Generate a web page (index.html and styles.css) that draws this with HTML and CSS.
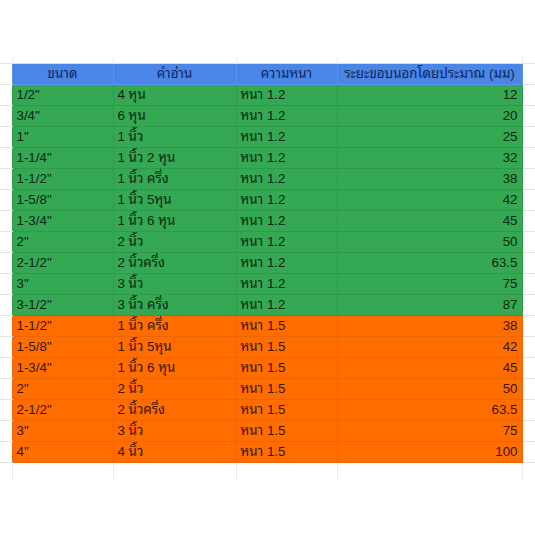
FILE: index.html
```html
<!DOCTYPE html>
<html lang="th">
<head>
<meta charset="utf-8">
<title>ตารางขนาดท่อ</title>
<link rel="stylesheet" href="styles.css">
</head>
<body>
<div class="sheet">
<table class="grid">
<colgroup>
<col class="c-m"><col class="c-a"><col class="c-b"><col class="c-c"><col class="c-d"><col class="c-r">
</colgroup>
<tbody>
<tr class="spacer top"><td></td><td></td><td></td><td></td><td></td><td></td></tr>
<tr class="head"><td class="m"></td><td>ขนาด</td><td>คำอ่าน</td><td>ความหนา</td><td>ระยะขอบนอกโดยประมาณ (มม)</td><td class="m"></td></tr>
<tr class="g"><td class="m"></td><td>1/2"</td><td>4 หุน</td><td>หนา 1.2</td><td class="n">12</td><td class="m"></td></tr>
<tr class="g"><td class="m"></td><td>3/4"</td><td>6 หุน</td><td>หนา 1.2</td><td class="n">20</td><td class="m"></td></tr>
<tr class="g"><td class="m"></td><td>1"</td><td>1 นิ้ว</td><td>หนา 1.2</td><td class="n">25</td><td class="m"></td></tr>
<tr class="g"><td class="m"></td><td>1-1/4"</td><td>1 นิ้ว 2 หุน</td><td>หนา 1.2</td><td class="n">32</td><td class="m"></td></tr>
<tr class="g"><td class="m"></td><td>1-1/2"</td><td>1 นิ้ว ครึ่ง</td><td>หนา 1.2</td><td class="n">38</td><td class="m"></td></tr>
<tr class="g"><td class="m"></td><td>1-5/8"</td><td>1 นิ้ว 5หุน</td><td>หนา 1.2</td><td class="n">42</td><td class="m"></td></tr>
<tr class="g"><td class="m"></td><td>1-3/4"</td><td>1 นิ้ว 6 หุน</td><td>หนา 1.2</td><td class="n">45</td><td class="m"></td></tr>
<tr class="g"><td class="m"></td><td>2"</td><td>2 นิ้ว</td><td>หนา 1.2</td><td class="n">50</td><td class="m"></td></tr>
<tr class="g"><td class="m"></td><td>2-1/2"</td><td>2 นิ้วครึ่ง</td><td>หนา 1.2</td><td class="n">63.5</td><td class="m"></td></tr>
<tr class="g"><td class="m"></td><td>3"</td><td>3 นิ้ว</td><td>หนา 1.2</td><td class="n">75</td><td class="m"></td></tr>
<tr class="g"><td class="m"></td><td>3-1/2"</td><td>3 นิ้ว ครึ่ง</td><td>หนา 1.2</td><td class="n">87</td><td class="m"></td></tr>
<tr class="o"><td class="m"></td><td>1-1/2"</td><td>1 นิ้ว ครึ่ง</td><td>หนา 1.5</td><td class="n">38</td><td class="m"></td></tr>
<tr class="o"><td class="m"></td><td>1-5/8"</td><td>1 นิ้ว 5หุน</td><td>หนา 1.5</td><td class="n">42</td><td class="m"></td></tr>
<tr class="o"><td class="m"></td><td>1-3/4"</td><td>1 นิ้ว 6 หุน</td><td>หนา 1.5</td><td class="n">45</td><td class="m"></td></tr>
<tr class="o"><td class="m"></td><td>2"</td><td>2 นิ้ว</td><td>หนา 1.5</td><td class="n">50</td><td class="m"></td></tr>
<tr class="o"><td class="m"></td><td>2-1/2"</td><td>2 นิ้วครึ่ง</td><td>หนา 1.5</td><td class="n">63.5</td><td class="m"></td></tr>
<tr class="o"><td class="m"></td><td>3"</td><td>3 นิ้ว</td><td>หนา 1.5</td><td class="n">75</td><td class="m"></td></tr>
<tr class="o"><td class="m"></td><td>4"</td><td>4 นิ้ว</td><td>หนา 1.5</td><td class="n">100</td><td class="m"></td></tr>
<tr class="spacer bottom"><td></td><td></td><td></td><td></td><td></td><td></td></tr>
</tbody>
</table>
</div>
</body>
</html>
```
FILE: styles.css
```css
html, body {
  margin: 0;
  padding: 0;
  background: #ffffff;
}
body {
  width: 535px;
  height: 535px;
  overflow: hidden;
  font-family: "Liberation Sans", Arial, Tahoma, "Noto Sans Thai Looped", "Noto Serif Thai", Garuda, Loma, "Noto Sans Thai", "DejaVu Sans", sans-serif;
  font-size: 13.33px;
}
.sheet {
  padding-top: 57px;
}
.grid {
  border-collapse: collapse;
  table-layout: fixed;
  width: 535px;
}
.c-m { width: 12px; }
.c-a { width: 101px; }
.c-b { width: 123px; }
.c-c { width: 101px; }
.c-d { width: 185px; }
.c-r { width: 13px; }
.grid td {
  height: 20px;
  padding: 0 4px 0 4px;
  line-height: 20px;
  border: 1px solid #e3e3e3;
  white-space: nowrap;
  overflow: hidden;
  vertical-align: bottom;
  box-sizing: border-box;
}
.grid td.m {
  border-left: none;
  border-right: none;
  padding: 0;
}
.grid tr td:first-child { border-left: none; }
.grid tr td:last-child { border-right: none; }
.spacer td {
  padding: 0;
  border-top: none;
  border-bottom: none;
  border-color: #ececec;
}
.spacer.top td { height: 6px; }
.spacer.bottom td { height: 18px; }
.spacer td:first-child, .spacer td:last-child { border: none; }

.head td:not(.m) {
  background: #4a86e8;
  color: #0e2658;
  text-align: center;
  border-color: #5b92ea;
  border-top-color: #dcdcdc;
}
.g td:not(.m) {
  background: #34a853;
  color: #0c2612;
  border-color: #2f9a4b;
}
.o td:not(.m) {
  background: #ff6d01;
  color: #3a1500;
  border-color: #ec6506;
}
.grid td.n { text-align: right; }
```
